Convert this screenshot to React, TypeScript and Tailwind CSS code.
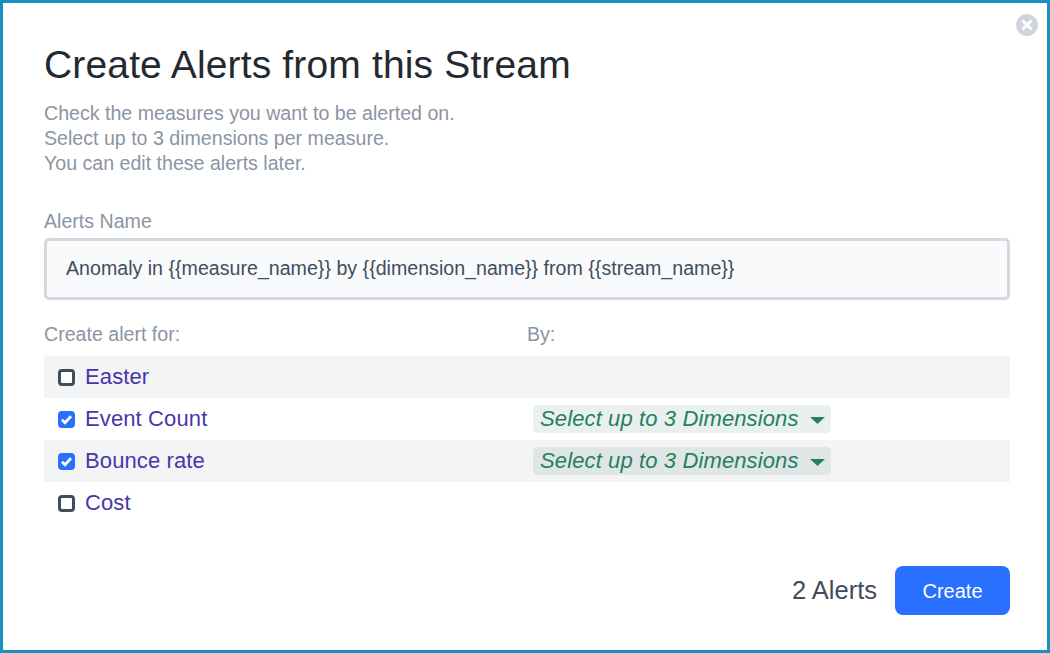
import React from "react";

function Row({ label, checked, shaded }: { label: string; checked?: boolean; shaded?: boolean }) {
  return (
    <div className={`flex h-[42px] items-center pl-[14px] ${shaded ? "bg-[#f3f4f6]" : ""}`}>
      <div className="flex w-[475px] items-center">
        {checked ? (
          <span className="flex h-[17px] w-[17px] items-center justify-center rounded-[4px] bg-[#2970ff]">
            <svg width="13" height="13" viewBox="0 0 13 13" fill="none">
              <path d="M2 6.8L5 9.8L11 3.2" stroke="white" strokeWidth="2.8" />
            </svg>
          </span>
        ) : (
          <span className="h-[17px] w-[17px] rounded-[4px] border-[3px] border-[#3f4e5c] bg-white" />
        )}
        <span className="ml-[10px] text-[22px] leading-none tracking-[0.12px] text-[#4a36a8]">{label}</span>
      </div>
      {checked && (
        <div className="flex h-[28px] w-[298px] items-center rounded-[5px] bg-[#236b5a]/10 pl-[7px]">
          <span className="text-[22px] leading-none italic tracking-[0.12px] text-[#268060]">Select up to 3 Dimensions</span>
          <svg className="ml-[11px] mt-[3px]" width="15" height="7" viewBox="0 0 15 7">
            <path d="M0 0H15L7.5 7Z" fill="#268060" />
          </svg>
        </div>
      )}
    </div>
  );
}

export default function App() {
  return (
    <div className="relative h-[653px] w-[1050px] border-[3px] border-[#1a90c0] bg-white font-['Liberation_Sans',Arial,sans-serif]">
      <button className="absolute right-[9px] top-[11px] flex h-[22px] w-[22px] items-center justify-center rounded-full bg-[#d0d5dd]">
        <svg width="14" height="14" viewBox="0 0 14 14">
          <path d="M2.5 2.5L11.5 11.5M11.5 2.5L2.5 11.5" stroke="white" strokeWidth="2.8" />
        </svg>
      </button>
      <div className="flex h-full flex-col pl-[41px] pr-[37px] pt-[38px]">
        <h1 className="text-[39px] leading-[48px] font-normal tracking-[0.15px] text-[#24292f]">Create Alerts from this Stream</h1>
        <div className="mt-[12px] text-[19.6px] leading-[25px] text-[#8a95a3]">
          <p>Check the measures you want to be alerted on.</p>
          <p>Select up to 3 dimensions per measure.</p>
          <p>You can edit these alerts later.</p>
        </div>
        <div className="mt-[33px] text-[19.6px] leading-[25px] text-[#8a95a3]">Alerts Name</div>
        <div className="mt-[4px] flex h-[62px] items-center rounded-[5px] border-[3px] border-[#d3d9df] bg-[#f9fafc] pl-[19px] text-[19.6px] tracking-[0.01px] text-[#3f4e5c]">
          {"Anomaly in {{measure_name}} by {{dimension_name}} from {{stream_name}}"}
        </div>
        <div className="mt-[22px] flex text-[19.6px] leading-[25px] text-[#8a95a3]">
          <div className="w-[483px]">Create alert for:</div>
          <div>By:</div>
        </div>
        <div className="mt-[9px]">
          <Row label="Easter" shaded />
          <Row label="Event Count" checked />
          <Row label="Bounce rate" checked shaded />
          <Row label="Cost" />
        </div>
        <div className="mt-[42px] flex items-center justify-end">
          <span className="text-[25.5px] text-[#3f4e5c]">2 Alerts</span>
          <button className="ml-[18px] h-[49px] w-[115px] rounded-[8px] bg-[#2970ff] text-[20px] text-white">Create</button>
        </div>
      </div>
    </div>
  );
}
